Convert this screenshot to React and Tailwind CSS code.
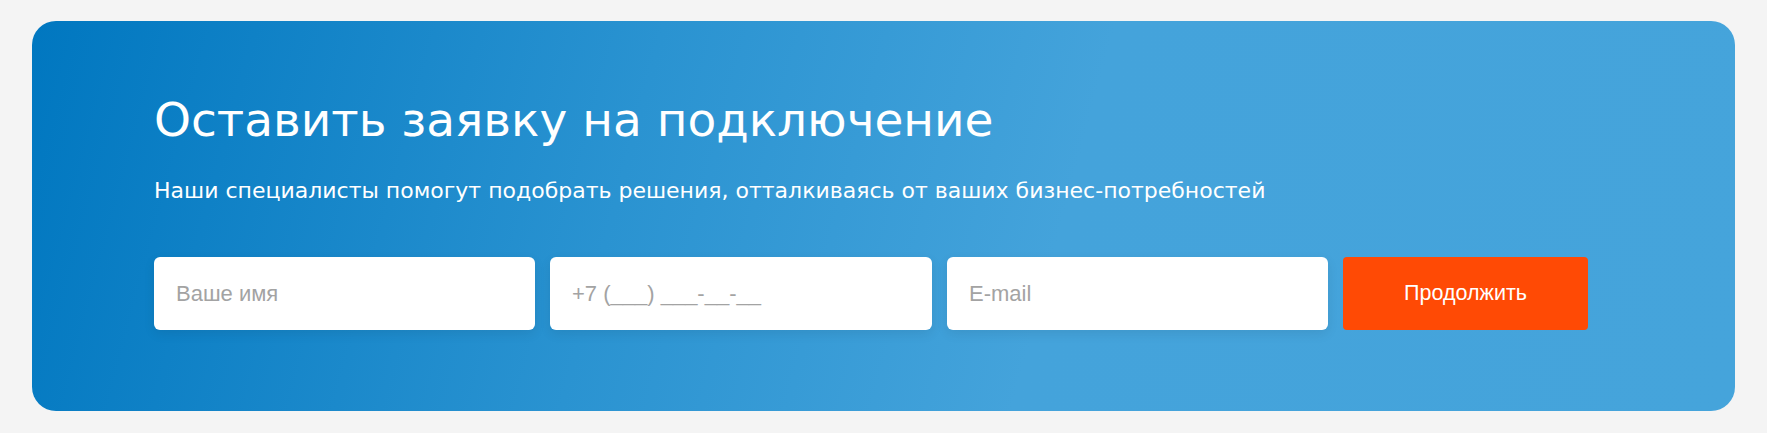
export default function App() {
  return (
    <div className="min-h-[433px] w-full bg-[#f4f4f4] px-8 pt-[21px] pb-[22px]">
      <div className="h-[390px] rounded-3xl bg-[linear-gradient(105deg,#0077c0_0%,#2a93d1_35%,#44a3db_60%,#45a4db_100%)] pl-[122px] pt-[73px]">
        <h2 className="font-['DejaVu_Sans',sans-serif] text-[47px] font-normal leading-[52px] text-white">
          Оставить заявку на подключение
        </h2>
        <p className="mt-[31px] font-['DejaVu_Sans',sans-serif] text-[22px] leading-[28px] text-white">
          Наши специалисты помогут подобрать решения, отталкиваясь от ваших бизнес-потребностей
        </p>
        <form className="mt-[52px] flex gap-[15px]" onSubmit={(e) => e.preventDefault()}>
          <input
            className="h-[73px] w-[381px] rounded-md bg-white px-[22px] font-['Liberation_Sans',sans-serif] text-[22px] text-gray-700 shadow-[0_4px_12px_rgba(0,0,0,0.08)] outline-none placeholder:text-[#a3a3a3]"
            placeholder="Ваше имя"
          />
          <input
            className="h-[73px] w-[382px] rounded-md bg-white px-[22px] font-['Liberation_Sans',sans-serif] text-[22px] text-gray-700 shadow-[0_4px_12px_rgba(0,0,0,0.08)] outline-none placeholder:text-[#a3a3a3]"
            placeholder="+7 (___) ___-__-__"
          />
          <input
            className="h-[73px] w-[381px] rounded-md bg-white px-[22px] font-['Liberation_Sans',sans-serif] text-[22px] text-gray-700 shadow-[0_4px_12px_rgba(0,0,0,0.08)] outline-none placeholder:text-[#a3a3a3]"
            placeholder="E-mail"
          />
          <button
            type="submit"
            className="h-[73px] w-[245px] rounded bg-[#ff4a05] font-['Liberation_Sans',sans-serif] text-[21.5px] text-white"
          >
            Продолжить
          </button>
        </form>
      </div>
    </div>
  );
}
